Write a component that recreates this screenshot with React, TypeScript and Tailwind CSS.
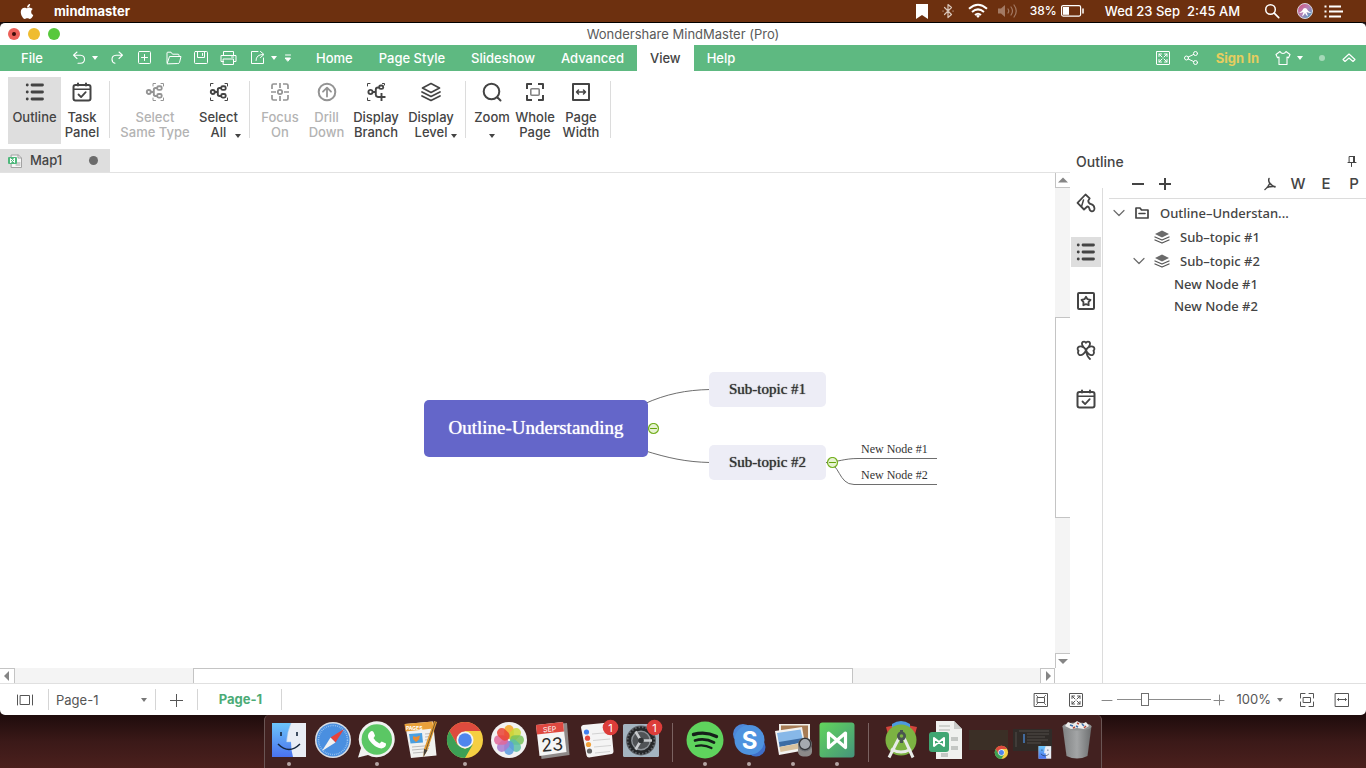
import React from "react";
import type { ReactNode } from "react";
import { FaApple } from "react-icons/fa";

type IconProps = { w?: number; h?: number; sw?: number; children: ReactNode; className?: string };

function Icon({ w = 20, h = 20, sw = 1, children, className = "" }: IconProps) {
  return (
    <svg
      width={w}
      height={h}
      viewBox={`0 0 ${w} ${h}`}
      fill="none"
      stroke="currentColor"
      strokeWidth={sw}
      strokeLinecap="round"
      strokeLinejoin="round"
      className={`shrink-0 ${className}`}
      aria-hidden="true"
    >
      {children}
    </svg>
  );
}

const Caret = ({ className = "" }: { className?: string }) => (
  <Icon w={6} h={4} className={className}>
    <path d="M0 0h6L3 4z" fill="currentColor" stroke="none" />
  </Icon>
);

/* ---------- shared glyphs ---------- */

const ListGlyph = () => (
  <Icon w={20} h={20} sw={2}>
    <path d="M7 3h10.500M7 10h10.500M7 17h10.500" strokeWidth="2.800" />
    <path d="M2.200 3h.1M2.200 10h.1M2.200 17h.1" strokeWidth="2.800" />
  </Icon>
);

const CalendarGlyph = () => (
  <Icon w={20} h={20} sw={2}>
    <rect x="1.500" y="3" width="17" height="15.500" rx="2" />
    <path d="M2 7.300h16" strokeWidth="1.400" />
    <path d="M6 1.500v2M14 1.500v2" />
    <path d="M6.500 12.500l2.600 2.600 4.600-5" strokeWidth="1.800" />
  </Icon>
);

const BranchGlyph = ({ full }: { full?: boolean }) => (
  <Icon w={20} h={20} sw={2}>
    <path
      d={
        full
          ? "M4 1.500H1.500V4M16 1.500h2.500V4M18.500 16v2.500H16M4 18.500H1.500V16"
          : "M8 4V1.500h2.500M16 1.500h2.500V4M18.500 16v2.500H16M10.500 18.500H8V16"
      }
      strokeWidth="1"
    />
    <circle cx="3.800" cy="10" r="2" strokeWidth="1.900" />
    <path d="M6 10h2.500M12 6h-1.500q-1.700 0-1.700 1.700v4.600q0 1.700 1.700 1.700H12" strokeWidth="1.900" />
    <rect x="12.200" y="4.300" width="4.500" height="3.600" rx="1.500" strokeWidth="1.900" />
    <rect x="12.200" y="12" width="4.500" height="3.600" rx="1.500" strokeWidth="1.900" />
  </Icon>
);

const DisplayBranchGlyph = () => (
  <Icon w={20} h={20} sw={2}>
    <path d="M4 1.500H1.500V4M16.500 1.500h2V3M1.500 16v2.500H4" strokeWidth="1" />
    <circle cx="4.500" cy="10" r="2.100" strokeWidth="1.900" />
    <path d="M7 10h2.500M13 5.500h-1q-2.200 0-2.200 2.200v5q0 1.800 1.700 2" strokeWidth="1.900" />
    <rect x="13.200" y="3.500" width="4" height="3.400" rx="1.500" strokeWidth="1.900" />
    <path d="M15.500 11v8M11.500 15h8" strokeWidth="1.900" strokeLinecap="butt" />
  </Icon>
);

const FocusGlyph = () => (
  <Icon w={20} h={20} sw={2}>
    <path d="M7 2H3.500Q2 2 2 3.500V7M13 2h3.500Q18 2 18 3.500V7M7 18H3.500Q2 18 2 16.500V13M13 18h3.500q1.500 0 1.500-1.500V13" strokeWidth="1.700" strokeLinecap="butt" />
    <path d="M10 1v5M10 14v5M1 10h5M14 10h5" strokeWidth="1.700" strokeLinecap="butt" />
    <circle cx="10" cy="10" r="2.200" strokeWidth="1.700" />
  </Icon>
);

const DrillGlyph = () => (
  <Icon w={20} h={20} sw={2}>
    <circle cx="10" cy="10" r="8.300" />
    <path d="M10 14.500V6M6 9.700L10 5.700l4 4" strokeWidth="1.800" />
  </Icon>
);

const LevelGlyph = () => (
  <Icon w={22} h={20} sw={2}>
    <path d="M11 1.500L19.500 6 11 10.500 2.500 6z" strokeWidth="1.700" />
    <path d="M2 10l9 4.500L20 10M2 14l9 4.500L20 14" strokeWidth="1.700" />
  </Icon>
);

const SearchGlyph = () => (
  <Icon w={20} h={20} sw={2}>
    <circle cx="9.500" cy="9.500" r="7.800" />
    <path d="M15.500 15.500l3 3" />
  </Icon>
);

const WholePageGlyph = () => (
  <Icon w={20} h={20} sw={2}>
    <path d="M7 2H2v5M13 2h5v5M7 18H2v-5M13 18h5v-5" strokeLinecap="butt" />
    <rect x="5.800" y="6.800" width="8.400" height="6.400" rx="1" strokeWidth="1.600" stroke="#858585" />
  </Icon>
);

const PageWidthGlyph = () => (
  <Icon w={20} h={20} sw={2}>
    <rect x="2" y="2" width="16" height="16" />
    <path d="M5.500 10h9M7.500 8l-2 2 2 2M12.500 8l2 2-2 2" strokeWidth="1.500" />
  </Icon>
);

const FitGlyph = () => (
  <Icon w={16} h={16} sw={1}>
    <rect x="1.500" y="1.500" width="13" height="13" />
    <rect x="4.500" y="5.500" width="7" height="5" />
    <path d="M3.500 3.500l1 1M12.500 3.500l-1 1M3.500 12.500l1-1M12.500 12.500l-1-1" />
  </Icon>
);

const ExpandGlyph = () => (
  <Icon w={16} h={16} sw={1}>
    <rect x="1.500" y="1.500" width="13" height="13" rx="0.500" />
    <path d="M4 6.500V4h2.500M4 4l3 3M9.500 4H12v2.500M12 4L9 7M4 9.500V12h2.500M4 12l3-3M9.500 12H12V9.500M12 12L9 9" />
  </Icon>
);

/* ---------- system menu bar ---------- */

function MenuBar() {
  return (
    <header className="flex h-[22px] shrink-0 items-center bg-[#6d300f] text-[13px] leading-4 text-white">
      <FaApple className="ml-5 h-[17px] w-[14px] shrink-0" />
      <span className="ml-5 font-bold">mindmaster</span>
      <div className="ml-auto flex items-center pr-[22px] font-medium">
        <Icon w={12} h={16}>
          <path d="M0 1h12v15l-6-4-6 4z" fill="#fff" stroke="none" />
        </Icon>
        <Icon w={12} h={16} className="ml-3.5 text-[#d9c5b8]">
          <path d="M2.500 4.500l7 7L6 14.500v-13l3.500 3-7 7M1 8h.1M11 8h.1" strokeWidth="1.200" />
        </Icon>
        <Icon w={20} h={16} className="ml-3.5">
          <path d="M1 5.800q9-8 18 0M4 9q6-5.200 12 0M7 12q3-2.600 6 0" strokeWidth="2" strokeLinecap="butt" />
          <path d="M8 12.800q2-1.500 4 0L10 15z" fill="#fff" stroke="none" />
        </Icon>
        <Icon w={20} h={16} className="ml-2.5 text-[#a37a64]">
          <path d="M0 5.500h3l4-3.500v12l-4-3.500H0z" fill="currentColor" stroke="none" />
          <path d="M10 6q1.500 2 0 4M13 4q3 4 0 8M16 2q4.500 6 0 12" strokeWidth="1.200" />
        </Icon>
        <span className="ml-3 text-xs">38%</span>
        <Icon w={24} h={14} className="ml-1">
          <rect x="0.600" y="1.600" width="19" height="10.500" rx="1.500" strokeWidth="1.200" />
          <rect x="2" y="3" width="6" height="7.800" fill="#fff" stroke="none" />
          <path d="M22 5v4" strokeWidth="1.500" />
        </Icon>
        <span className="ml-5 whitespace-pre">Wed 23 Sep  2:45 AM</span>
        <Icon w={16} h={16} className="ml-6">
          <circle cx="6.500" cy="6.500" r="4.800" strokeWidth="1.500" />
          <path d="M10.200 10.200l4.500 4.500" strokeWidth="1.700" />
        </Icon>
        <Icon w={18} h={18} className="ml-4">
          <defs>
            <linearGradient id="siri" x1="0" y1="0" x2="1" y2="1">
              <stop offset="0" stopColor="#d94a72" />
              <stop offset="0.500" stopColor="#b583b8" />
              <stop offset="1" stopColor="#2ea3c4" />
            </linearGradient>
          </defs>
          <circle cx="9" cy="9" r="7.500" fill="url(#siri)" stroke="#d9d5dc" />
          <path d="M3 11q3-1 4.500-4.500Q9 5.500 10.500 6.500q1.500 3.500 5 4.500-3 0-5-1 1 3 1.500 4.500-2-1-3-3.500-1 2.500-3 3.500.5-2 1.500-4.500-2 1-4.500 1z" fill="#fff" stroke="none" />
        </Icon>
        <Icon w={20} h={16} className="ml-2.5">
          <path d="M5 3.500h12M5 8.500h14M5 13.500h12" strokeWidth="2" strokeLinecap="butt" />
          <path d="M0.500 3.500h2M0.500 8.500h2M0.500 13.500h2" strokeWidth="2" strokeLinecap="butt" />
        </Icon>
      </div>
    </header>
  );
}

/* ---------- title and command bars ---------- */

function TitleBar() {
  return (
    <div className="relative flex h-[22px] shrink-0 items-center justify-center">
      <div className="absolute left-2 flex gap-2">
        <button aria-label="Close" className="flex size-3 items-center justify-center rounded-full bg-[#ec6059]">
          <span className="size-1 rounded-full bg-[#3c0c0a]" />
        </button>
        <button aria-label="Minimize" className="size-3 rounded-full bg-[#efbc30]" />
        <button aria-label="Zoom window" className="size-3 rounded-full bg-[#57c83c]" />
      </div>
      <h1 className="text-[13px] leading-4 text-[#5a5a5a]">Wondershare MindMaster (Pro)</h1>
    </div>
  );
}

const TABS = ["Home", "Page Style", "Slideshow", "Advanced", "View", "Help"];

function CommandBar() {
  return (
    <div className="flex h-[26px] shrink-0 items-center bg-[#5eb981] text-[13px] font-medium text-white">
      <button className="h-full w-16 pt-0.5 text-center">File</button>
      <div className="flex w-[239px] shrink-0 items-center pl-2">
        <button aria-label="Undo">
          <Icon w={16} h={16}>
            <path d="M5 2L1.500 5.200 5 8.500M2 5.200h6.500q4 .3 4 4t-4 4H6" strokeWidth="1.100" />
          </Icon>
        </button>
        <Caret className="ml-1" />
        <button aria-label="Redo" className="ml-3">
          <Icon w={14} h={16}>
            <path d="M9 2l3.500 3.200L9 8.500M12 5.200H6q-4 .3-4 4 0 3.300 3 4" strokeWidth="1.100" />
          </Icon>
        </button>
        <button aria-label="New" className="ml-3.5">
          <Icon w={14} h={16}>
            <rect x="0.500" y="1.500" width="12" height="12" rx="1" />
            <path d="M6.500 4.500v6M3.500 7.500h6" />
          </Icon>
        </button>
        <button aria-label="Open" className="ml-3.5">
          <Icon w={16} h={16}>
            <path d="M1 12.500V3q0-.8.800-.800H5l1.500 2H12q1 0 1 1v1.300M1.200 13.500L3.500 6.500H15l-1.500 6q-.3 1-1.300 1z" />
          </Icon>
        </button>
        <button aria-label="Save" className="ml-3">
          <Icon w={14} h={16}>
            <rect x="0.500" y="1.500" width="13" height="12" rx="1" />
            <path d="M3.500 2v5.500h7V2M8.500 3.500v2" />
          </Icon>
        </button>
        <button aria-label="Print" className="ml-3">
          <Icon w={17} h={16}>
            <path d="M3.500 5V1.500h10V5M3.500 11.500H1V5.500h15v6h-2.500M3.500 9h10v5.500h-10zM11.500 7h2" />
          </Icon>
        </button>
        <button aria-label="Export" className="ml-3.5">
          <Icon w={14} h={16}>
            <path d="M7 1.500H.5v12h12V8M5 10.500q0-6 7-6M9.500 1.500l3.500 3-3.500 3" />
          </Icon>
        </button>
        <Caret className="ml-1.5" />
        <button aria-label="More commands" className="ml-2">
          <Icon w={6} h={8}>
            <path d="M0.500 1h5M0.500 4h5L3 7z" fill="currentColor" />
          </Icon>
        </button>
      </div>
      <nav className="flex h-full">
        {TABS.map((t) => (
          <button
            key={t}
            className={
              t === "View"
                ? "h-full bg-white px-[13px] pt-0.5 text-[#444]"
                : "h-full px-[13px] pt-0.5"
            }
          >
            {t}
          </button>
        ))}
      </nav>
      <div className="ml-auto flex h-full items-center pr-2.5">
        <button aria-label="Full screen"><ExpandGlyph /></button>
        <button aria-label="Share" className="ml-3">
          <Icon w={16} h={16}>
            <circle cx="3.500" cy="8" r="2" />
            <circle cx="12.500" cy="3.500" r="2" />
            <circle cx="12.500" cy="12.500" r="2" />
            <path d="M5.300 7l5.400-2.600M5.300 9l5.400 2.600" />
          </Icon>
        </button>
        <a href="#sign-in" className="ml-[17px] pt-0.5 font-bold text-[#e7cd5e]">Sign In</a>
        <button aria-label="Theme" className="ml-4">
          <Icon w={16} h={16}>
            <path d="M5 1.500L1 4.500l1.500 3.300L4 7v7.500h8V7l1.500.800L15 4.500l-4-3q-1 2-3 2t-3-2z" strokeWidth="1.100" />
          </Icon>
        </button>
        <Caret className="ml-1.5" />
        <span className="ml-4 size-1.5 rounded-sm bg-[#a5d9b8]" />
        <button aria-label="Collapse ribbon" className="ml-[17px]">
          <Icon w={14} h={12}>
            <path d="M1 7.500L7 2l6 5.500L11 9.500 7 6 3 9.500z" strokeWidth="1.100" />
          </Icon>
        </button>
      </div>
    </div>
  );
}

/* ---------- ribbon ---------- */

type RibbonButtonProps = {
  icon: ReactNode;
  top: string;
  bottom?: string;
  width: string;
  off?: boolean;
  active?: boolean;
  caret?: boolean;
};

function RibbonButton({ icon, top, bottom, width, off, active, caret }: RibbonButtonProps) {
  return (
    <button
      disabled={off}
      className={`relative flex h-[67px] shrink-0 flex-col items-center pt-[5px] text-[13px] leading-[15px] ${width} ${
        off ? "text-[#b3b3b3]" : "text-[#444]"
      } ${active ? "bg-[#dedede]" : ""}`}
    >
      <span className={off ? "text-[#949494]" : ""}>{icon}</span>
      <span className="mt-2 whitespace-nowrap font-medium">{top}</span>
      {bottom && <span className="whitespace-nowrap font-medium">{bottom}</span>}
      {caret && (
        <Caret className={bottom ? "absolute right-0.5 bottom-1.5" : "absolute bottom-1.5"} />
      )}
    </button>
  );
}

const Divider = () => <span className="mx-1.5 mt-1 h-[57px] w-px shrink-0 bg-[#dcdcdc]" />;

function Ribbon() {
  return (
    <div className="flex h-[78px] shrink-0 items-start pt-1.5 pl-2">
      <RibbonButton width="w-[53px]" active icon={<ListGlyph />} top="Outline" />
      <RibbonButton width="w-[42px]" icon={<CalendarGlyph />} top="Task" bottom="Panel" />
      <Divider />
      <RibbonButton width="w-[78px]" off icon={<BranchGlyph />} top="Select" bottom="Same Type" />
      <RibbonButton width="w-[49px]" icon={<BranchGlyph full />} top="Select" bottom="All" caret />
      <Divider />
      <RibbonButton width="w-[48px]" off icon={<FocusGlyph />} top="Focus" bottom="On" />
      <RibbonButton width="w-[45px]" off icon={<DrillGlyph />} top="Drill" bottom="Down" />
      <RibbonButton width="w-[54px]" icon={<DisplayBranchGlyph />} top="Display" bottom="Branch" />
      <RibbonButton width="w-[56px]" icon={<LevelGlyph />} top="Display" bottom="Level" caret />
      <Divider />
      <RibbonButton width="w-[40px]" icon={<SearchGlyph />} top="Zoom" caret />
      <RibbonButton width="w-[46px]" icon={<WholePageGlyph />} top="Whole" bottom="Page" />
      <RibbonButton width="w-[46px]" icon={<PageWidthGlyph />} top="Page" bottom="Width" />
      <Divider />
    </div>
  );
}

/* ---------- canvas ---------- */

function MindMap() {
  return (
    <div className="absolute top-[199px] left-[424px] h-[113px] w-[513px] font-['Liberation_Serif',serif]">
      <svg width="513" height="114" fill="none" stroke="#6e6e6e" strokeWidth="1" className="absolute top-0 left-0">
        <path d="M220 32C242 22 262 18 286 17.500M220 78.500C244 86 262 90 286 90.500M402 90.500C414 90 420 86.500 434 86.500H513M402 90.500C416 90 414 112.500 430 112.500H513" />
      </svg>
      <div className="absolute top-7 left-0 flex h-[57px] w-[224px] items-center justify-center rounded-[5px] bg-[#6466c9] text-[19px] text-white text-shadow-[0_0_1px_#ffffff]">
        Outline-Understanding
      </div>
      <div className="absolute top-0 left-[285px] flex h-[35px] w-[117px] items-center justify-center rounded-[5px] bg-[#ededf6] text-[15px] text-[#333] text-shadow-[0_0_1px_#333333]">
        Sub-topic #1
      </div>
      <div className="absolute top-[73px] left-[285px] flex h-[35px] w-[117px] items-center justify-center rounded-[5px] bg-[#ededf6] text-[15px] text-[#333] text-shadow-[0_0_1px_#333333]">
        Sub-topic #2
      </div>
      <div className="absolute top-[69px] left-[433px] w-20 pl-1 text-xs leading-4 text-[#333]">New Node #1</div>
      <div className="absolute top-[95px] left-[433px] w-20 pl-1 text-xs leading-4 text-[#333]">New Node #2</div>
      <button aria-label="Collapse topic" className="absolute top-[51px] left-[224px]">
        <Icon w={12} h={12}>
          <circle cx="5.500" cy="5.500" r="5" fill="#e6f2d2" stroke="#75b021" strokeWidth="1.200" />
          <path d="M2.500 5.500h6" stroke="#66a50c" strokeWidth="1.200" />
        </Icon>
      </button>
      <button aria-label="Collapse topic" className="absolute top-[85px] left-[403px]">
        <Icon w={12} h={12}>
          <circle cx="5.500" cy="5.500" r="5" fill="#e6f2d2" stroke="#75b021" strokeWidth="1.200" />
          <path d="M2.500 5.500h6" stroke="#66a50c" strokeWidth="1.200" />
        </Icon>
      </button>
    </div>
  );
}

function ScrollArrow({ d, label, className = "" }: { d: string; label: string; className?: string }) {
  return (
    <button
      aria-label={label}
      className={`flex size-[15px] shrink-0 items-center justify-center border-[#c4c4c4] bg-white text-[#858585] ${className}`}
    >
      <Icon w={10} h={10}>
        <path d={d} fill="currentColor" stroke="none" />
      </Icon>
    </button>
  );
}

function Workspace() {
  return (
    <div className="flex min-w-0 flex-1 flex-col">
      <div className="flex h-6 shrink-0 items-start border-b border-[#e2e2e2]">
        <button className="flex h-[23px] w-[110px] items-center bg-[#dedede] pl-2 text-[13px] font-medium text-[#444]">
          <Icon w={14} h={14}>
            <path d="M3.500 1h7l3 3v9.500h-10z" fill="#f7f7f7" stroke="#a3a3a3" />
            <path d="M10 1v3h3M8 9h4M8 11h4" stroke="#a3a3a3" />
            <rect x="0" y="3" width="9" height="7" rx="1" fill="#4fb87c" stroke="none" />
            <path d="M2.500 8.500v-4l4 4v-4z" stroke="#fff" />
          </Icon>
          <span className="ml-2">Map1</span>
          <span className="ml-auto mr-3 size-[9px] rounded-full bg-[#6b6b6b]" />
        </button>
      </div>
      <div className="flex min-h-0 flex-1">
        <main className="relative min-w-0 flex-1 overflow-hidden">
          <MindMap />
        </main>
        <div className="flex w-[15px] shrink-0 flex-col bg-[#f4f4f4]">
          <ScrollArrow label="Scroll up" d="M0 7.500h10L5 2.500z" className="border-b border-l" />
          <div className="flex-[130]" />
          <div className="flex-[200] border-y border-l border-[#c4c4c4] bg-white" />
          <div className="flex-[136]" />
          <ScrollArrow label="Scroll down" d="M0 3h10L5 8z" className="border-t border-l" />
        </div>
      </div>
      <div className="flex h-[15px] shrink-0 pr-[15px]">
        <div className="flex flex-1 bg-[#f4f4f4]">
          <ScrollArrow label="Scroll left" d="M7 0v10L2 5z" className="border-t border-r" />
          <div className="flex-[178]" />
          <div className="flex-[660] border-x border-t border-[#c4c4c4] bg-white" />
          <div className="flex-[187]" />
          <ScrollArrow label="Scroll right" d="M3 0v10l5-5z" className="border-x border-t" />
        </div>
      </div>
    </div>
  );
}

/* ---------- outline panel ---------- */

const Chevron = () => (
  <Icon w={12} h={8}>
    <path d="M1 1.500l5 5 5-5" stroke="#6b6b6b" strokeWidth="1.200" />
  </Icon>
);

const Layers = () => (
  <Icon w={16} h={14}>
    <path d="M8 .5L15 4 8 7.500 1 4z" fill="#6b6b6b" stroke="none" />
    <path d="M1 7l7 3 7-3M1 10l7 3 7-3" stroke="#555" strokeWidth="1.300" />
  </Icon>
);

function SidePanel() {
  return (
    <aside className="flex w-[296px] shrink-0 flex-col text-[#444]">
      <div className="flex h-6 shrink-0 items-center pr-2 pl-1.5">
        <h2 className="text-[14px] font-medium">Outline</h2>
        <button aria-label="Pin panel" className="ml-auto">
          <Icon w={12} h={12}>
            <path d="M3.500 1.500h5v6h-5zM2 7.500h8M5.500 8v3.500" />
            <path d="M8 1v7" strokeWidth="2" strokeLinecap="butt" />
          </Icon>
        </button>
      </div>
      <div className="flex min-h-0 flex-1">
        <div className="flex w-8 shrink-0 flex-col gap-[19px] pt-[15px] pl-px">
          <button aria-label="Format" className="flex size-[30px] items-center justify-center">
            <Icon w={20} h={20} sw={2}>
              <path d="M1.500 9.800L9.500 1.500l4.200 3.800-1.500 2.600q.5 3 3 3.300 3 1 3.300 4.300-.2 3-2.800 2.800-2-.3-2.400-3-.6-1.800-2-1.800L8 16.500z" strokeWidth="1.800" />
              <path d="M5.500 13.500l2-6.500" strokeWidth="1.500" />
            </Icon>
          </button>
          <button aria-label="Outline" className="flex size-[30px] items-center justify-center bg-[#dedede]">
            <ListGlyph />
          </button>
          <button aria-label="Icons" className="flex size-[30px] items-center justify-center">
            <Icon w={20} h={20} sw={2}>
              <rect x="2" y="2" width="16" height="16" rx="1" />
              <path d="M10 5.800l1.500 2.400 3 .7-2 2.300.2 3-2.700-1-2.700 1 .2-3-2-2.300 3-.7z" strokeWidth="1.800" />
            </Icon>
          </button>
          <button aria-label="Clip art" className="flex size-[30px] items-center justify-center">
            <Icon w={20} h={20} sw={2}>
              <path d="M10 9.500C7 7 4.500 3.500 7 1.800q2-.8 3 1 1-1.800 3-1C15.500 3.500 13 7 10 9.500zM10 10C8 6.500 4 5.500 2 7.500q-1 2 .5 3.200-1.300 2.300.7 4.100C6 16 9 13 10 10zM10 10c2-3.500 6-4.500 8-2.500q1 2-.5 3.200 1.300 2.300-.7 4.100C14 16 11 13 10 10zM10 10q.5 6 4 9" strokeWidth="1.800" />
            </Icon>
          </button>
          <button aria-label="Task" className="flex size-[30px] items-center justify-center">
            <CalendarGlyph />
          </button>
        </div>
        <div className="mt-[15px] w-px shrink-0 bg-[#dcdcdc]" />
        <div className="min-w-0 flex-1 pl-1.5">
          <div className="flex h-[26px] items-center border-b border-[#dcdcdc] pr-1.5 pb-1 pl-[22px] text-[15px] leading-5 font-medium">
            <button aria-label="Collapse all">
              <Icon w={14} h={14}><path d="M1 7h12" strokeWidth="2" strokeLinecap="butt" /></Icon>
            </button>
            <button aria-label="Expand all" className="ml-3.5">
              <Icon w={12} h={14}><path d="M0 7h12M6 1v12" strokeWidth="2" strokeLinecap="butt" /></Icon>
            </button>
            <div className="ml-auto flex items-center">
              <button aria-label="Export as PDF">
                <Icon w={12} h={14}>
                  <path d="M5 1.500q-.8 2.500.7 4.500 1.800 2.500 5.300 4M5.700 6.500Q4 10.500 1 12.500M3 10.500q4-1.500 8-1" strokeWidth="1.500" />
                </Icon>
              </button>
              <button className="w-5 ml-3 text-center">W</button>
              <button className="w-5 ml-2 text-center">E</button>
              <button className="w-3 ml-3 text-center">P</button>
            </div>
          </div>
          <ul className="pt-0.5 font-['Noto_Sans',sans-serif] text-[13px] leading-6 font-medium">
            <li className="flex h-6 items-center pl-1">
              <Chevron />
              <Icon w={14} h={14} sw={2} className="ml-2.5">
                <path d="M1 12V2h4l1.500 2H13v8z" strokeWidth="1.700" />
                <path d="M4 7.500h6" strokeWidth="1.600" />
              </Icon>
              <span className="ml-[11px]">Outline–Understan...</span>
            </li>
            <li className="flex h-6 items-center pl-[45px]">
              <Layers />
              <span className="ml-2.5">Sub–topic #1</span>
            </li>
            <li className="flex h-6 items-center pl-6">
              <Chevron />
              <span className="ml-[9px]"><Layers /></span>
              <span className="ml-2.5">Sub–topic #2</span>
            </li>
            <li className="flex h-[22px] items-center pl-[65px]">New Node #1</li>
            <li className="flex h-[22px] items-center pl-[65px]">New Node #2</li>
          </ul>
        </div>
      </div>
    </aside>
  );
}

/* ---------- status bar ---------- */

function StatusBar() {
  return (
    <footer className="flex h-8 shrink-0 items-center border-t border-[#e0e0e0] text-[13px] text-[#555]">
      <button aria-label="Page panel" className="flex w-12 justify-center pl-0.5">
        <Icon w={18} h={12}>
          <path d="M1.500 1v10M16.500 1v10" />
          <rect x="4.500" y="1.500" width="9" height="9" />
        </Icon>
      </button>
      <span className="h-[21px] w-px bg-[#d5d5d5]" />
      <div className="relative flex w-[106px] items-center">
        <select aria-label="Page" className="w-full appearance-none bg-transparent pt-0.5 pl-[7px] outline-none">
          <option>Page-1</option>
        </select>
        <Caret className="pointer-events-none absolute right-2 text-[#777]" />
      </div>
      <span className="h-[21px] w-px bg-[#d5d5d5]" />
      <button aria-label="Add page" className="flex w-[41px] justify-center">
        <Icon w={14} h={14}><path d="M0 7.500h13M6.500 1v13" strokeLinecap="butt" /></Icon>
      </button>
      <span className="h-[21px] w-px bg-[#d5d5d5]" />
      <button className="w-[83px] pl-0.5 text-center font-bold text-[#4bab76]">Page-1</button>
      <span className="h-[21px] w-px bg-[#d5d5d5]" />
      <div className="ml-auto flex items-center pr-4">
        <button aria-label="Fit page"><FitGlyph /></button>
        <button aria-label="Full screen" className="ml-[19px]"><ExpandGlyph /></button>
        <button aria-label="Zoom out" className="ml-[17px]">
          <Icon w={12} h={12}><path d="M1 6.500h10" stroke="#888" /></Icon>
        </button>
        <input
          type="range"
          aria-label="Zoom level"
          min={0}
          max={100}
          defaultValue={28}
          className="ml-1 h-4 w-[94px] appearance-none bg-transparent [&::-webkit-slider-runnable-track]:h-px [&::-webkit-slider-runnable-track]:bg-[#8c8c8c] [&::-webkit-slider-thumb]:-mt-1.5 [&::-webkit-slider-thumb]:h-[13px] [&::-webkit-slider-thumb]:w-2 [&::-webkit-slider-thumb]:appearance-none [&::-webkit-slider-thumb]:border [&::-webkit-slider-thumb]:border-[#707070] [&::-webkit-slider-thumb]:bg-white"
        />
        <button aria-label="Zoom in" className="ml-0.5">
          <Icon w={12} h={12}><path d="M1 6.500h10M6.500 1v10" stroke="#888" /></Icon>
        </button>
        <button className="ml-3 flex items-center">
          100% <Caret className="ml-1.5 text-[#777]" />
        </button>
        <button aria-label="Whole page" className="ml-4">
          <Icon w={16} h={16}>
            <path d="M6 1.500H1.500V6M10 1.500h4.500V6M6 14.500H1.500V10M10 14.500h4.500V10" />
            <rect x="4.500" y="5.500" width="7" height="5" />
          </Icon>
        </button>
        <button aria-label="Page width" className="ml-[19px]">
          <Icon w={16} h={16}>
            <rect x="1.500" y="1.500" width="13" height="13" />
            <path d="M3.500 7.500h9M4.500 6.500v2M11.500 6.500v2" />
          </Icon>
        </button>
      </div>
    </footer>
  );
}

/* ---------- dock ---------- */

const PETALS = [
  ["#f5a623", 0], ["#c9d93a", 45], ["#79c25a", 90], ["#5cc0a5", 135],
  ["#5a9be0", 180], ["#a77bd0", 225], ["#e0679a", 270], ["#ea4335", 315],
] as const;

const ChromeMark = () => (
  <g stroke="none">
    <circle cx="20" cy="20" r="18" fill="#f5cf42" />
    <path d="M4.400 11A18 18 0 0 1 35.600 11H20L12.200 24.500z" fill="#dd4b3e" />
    <path d="M4.400 11A18 18 0 0 0 20 38l7.800-13.500L20 29 12.200 24.500z" fill="#3ca055" />
    <circle cx="20" cy="20" r="8.500" fill="#f3f3f3" />
    <circle cx="20" cy="20" r="6.800" fill="#4e86ee" />
  </g>
);

const FinderMark = () => (
  <g stroke="none">
    <rect x="3" y="3" width="34" height="34" fill="#e9edf5" />
    <path d="M3 3h19q-4 9-4.500 19H22q0 8 2 15H3z" fill="url(#finderBlue)" />
    <path d="M12 12v4M28 12v4" stroke="#15263d" strokeWidth="1.600" />
    <path d="M9 24q11 11 22 0" stroke="#15263d" strokeWidth="1.500" fill="none" />
    <path d="M22 3q-4 9-4.500 19H22" stroke="#8cc0ec" strokeWidth="0.500" fill="none" />
  </g>
);

const Badge = () => (
  <g stroke="none">
    <circle cx="33.500" cy="7.500" r="7.800" fill="#dd3d3a" />
    <text x="33.500" y="11.500" textAnchor="middle" fontSize="11" fill="#fff" fontFamily="Inter, sans-serif">1</text>
  </g>
);

const GEAR_TEETH = Array.from({ length: 24 }, (_, i) => i * 15);

type DockItem = { name: string; running?: boolean; art: ReactNode };

const APPS: DockItem[] = [
  { name: "Finder", running: true, art: <FinderMark /> },
  {
    name: "Safari",
    art: (
      <g stroke="none">
        <circle cx="20" cy="20" r="18" fill="#d9dde3" />
        <circle cx="20" cy="20" r="16.500" fill="#4a8fe0" />
        <circle cx="20" cy="20" r="14.500" fill="none" stroke="#a8cdf2" strokeWidth="1.500" strokeDasharray="0.700 1.200" />
        <path d="M31 9L17.500 17.500 22.500 22.500z" fill="#e8433b" />
        <path d="M9 31l8.500-13.500 5 5z" fill="#f1f1f1" />
      </g>
    ),
  },
  {
    name: "WhatsApp",
    running: true,
    art: (
      <g stroke="none">
        <path d="M1 37.500l3-9.500A18 18 0 1 1 11 35z" fill="#f0f2f0" />
        <circle cx="19.800" cy="19.500" r="15.200" fill="#5bc764" />
        <path d="M13 12q2-2 3.500 0l1.500 3.500q-.5 1.500-1.500 2.500 2 4 6 5.500l2.200-2 4.300 2q.5 4-4.500 5-5-.5-9.500-5T11 15.500q.3-2.300 2-3.500z" fill="#fff" />
      </g>
    ),
  },
  {
    name: "Pages",
    art: (
      <g stroke="none">
        <path d="M4 4l28-2.500 3.500 34L10 38z" fill="#f1f1ef" />
        <path d="M3.500 4l28-2.500.7 7L4.500 11.500z" fill="#e9a03b" />
        <text x="5" y="9.500" fontSize="5" fontWeight="700" fill="#fff" fontFamily="Inter, sans-serif">PAGES</text>
        <path d="M8 14l13-1 1 9.500-12.500 1z" fill="#4a9fe0" />
        <path d="M12 16l3 1 4-1.500-1 4-3 2.500-3-3z" fill="#e88b32" />
        <path d="M24 14l6-.5M24 17l6-.5M24 20l6-.5M11 27l18-1.500M11 30l17-1.500M12 33l12-1" stroke="#bbb" strokeWidth="1" />
        <path d="M33 1l3 1-9.500 28-4 7 .5-8z" fill="#e39a2f" />
        <path d="M26.500 30l-4 7 .5-8z" fill="#44413d" />
        <path d="M34.500 1.500L25 30" stroke="#5b4a33" strokeWidth="0.800" />
      </g>
    ),
  },
  { name: "Chrome", running: true, art: <ChromeMark /> },
  {
    name: "Photos",
    art: (
      <g stroke="none">
        <circle cx="20" cy="20" r="18" fill="#f2f2f2" />
        {PETALS.map(([c, a]) => (
          <rect key={a} x="15.200" y="5" width="9.600" height="14" rx="4.800" fill={c} opacity="0.850" transform={`rotate(${a} 20 20)`} />
        ))}
      </g>
    ),
  },
  {
    name: "Calendar",
    art: (
      <g stroke="none">
        <path d="M5 6l29-3 2.500 32-28 4z" fill="#8f8a89" />
        <path d="M3 5l27-3 3.500 30-27 4z" fill="#f5f5f5" />
        <path d="M3 5l27-3 1 9.500-27 3z" fill="#de4840" />
        <text x="10" y="11.500" fontSize="7" fill="#fff" transform="rotate(-5 18 8)" fontFamily="Inter, sans-serif">SEP</text>
        <text x="8" y="31" fontSize="18" fill="#2c2c2c" transform="rotate(-5 18 24)" fontFamily="Inter, sans-serif">23</text>
      </g>
    ),
  },
  {
    name: "Reminders",
    art: (
      <g stroke="none">
        <path d="M6 5l26-2.500q2 0 2 2l2.500 27q0 2-2 2.500L12 37.500q-2 0-2.500-2L4 7.500q0-2 2-2.500z" fill="#f4f4f4" />
        <circle cx="9.500" cy="12" r="2.600" fill="#3f7ff0" />
        <circle cx="10.500" cy="18.200" r="2.600" fill="#e3483e" />
        <circle cx="11.500" cy="24.500" r="2.600" fill="#f0a03a" />
        <circle cx="12.500" cy="31" r="2.600" fill="#666" />
        <path d="M15 14l17-1.500M16 20.500l17-1.500M17 27l17-1.500M18 33l15-1.500" stroke="#c9c9c9" strokeWidth="0.800" />
        <Badge />
      </g>
    ),
  },
  {
    name: "System Preferences",
    art: (
      <g stroke="none">
        <rect x="2" y="4" width="36" height="33" rx="1.500" fill="#a4b4c0" />
        <circle cx="20" cy="20.500" r="15" fill="#5e6267" />
        {GEAR_TEETH.map((a) => (
          <rect key={a} x="19" y="6.500" width="2" height="4" fill="#242628" transform={`rotate(${a} 20 20.500)`} />
        ))}
        <circle cx="20" cy="20.500" r="11.200" fill="#8e9398" stroke="#26282a" strokeWidth="2.500" />
        <circle cx="20" cy="20.500" r="8.500" fill="#505356" />
        <path d="M20 20.500l-5.500-9M20 20.500h11M20 20.500l-5.500 9" stroke="#c8cbce" strokeWidth="2.500" />
        <circle cx="20" cy="20.500" r="2.800" fill="#303335" />
        <Badge />
      </g>
    ),
  },
];

const RUNNING: DockItem[] = [
  {
    name: "Spotify",
    running: true,
    art: (
      <g fill="none" stroke="#15201a" strokeLinecap="round">
        <circle cx="20" cy="20" r="18.500" fill="#5fd35d" stroke="none" />
        <path d="M8.500 14.500q12-3.500 23 2" strokeWidth="3.400" />
        <path d="M10 20.500q10-2.800 19 2" strokeWidth="2.700" />
        <path d="M11 26q8-2 15.500 2" strokeWidth="2.200" />
      </g>
    ),
  },
  {
    name: "Skype",
    running: true,
    art: (
      <g stroke="none">
        <circle cx="14" cy="14" r="10" fill="#4d87d8" />
        <circle cx="27" cy="27" r="9.500" fill="#3f6fc9" />
        <circle cx="20.500" cy="20" r="15" fill="#4f93df" />
        <text x="20.500" y="28.500" textAnchor="middle" fontSize="24" fontWeight="700" fill="#fff" fontFamily="Inter, sans-serif">S</text>
      </g>
    ),
  },
  {
    name: "Preview",
    running: true,
    art: (
      <g stroke="none">
        <path d="M6 4h31v22H6z" fill="#f0eee9" />
        <path d="M8 5.500h27v18H8z" fill="#a77c55" />
        <path d="M2 11l27-4 4 23-27 5z" fill="#f3f3f1" />
        <path d="M4 13l23.500-3.500L30 20 6 24z" fill="#87b8e8" />
        <path d="M6 22l24-4 1 4-24.500 5z" fill="#3d6ca4" />
        <path d="M6.500 27L31 22.500l1 5L7.500 32z" fill="#d9c29f" />
        <rect x="25" y="24" width="14" height="12.500" rx="5" fill="#8c8a89" />
        <circle cx="32" cy="24.500" r="7" fill="#6f7175" />
        <circle cx="32" cy="24" r="5.600" fill="#a5aab0" stroke="#35373b" strokeWidth="1.200" />
      </g>
    ),
  },
  {
    name: "MindMaster",
    running: true,
    art: (
      <g stroke="none">
        <rect x="2.500" y="2.500" width="35" height="35" rx="3" fill="url(#mindGreen)" />
        <path d="M11.500 27.500V13L28.500 27.500V13z" fill="none" stroke="#fff" strokeWidth="3.200" strokeLinejoin="round" />
      </g>
    ),
  },
];

const FILES: DockItem[] = [
  {
    name: "Android Studio",
    art: (
      <g stroke="none">
        <path d="M5 7l10-2 5 4-12 9zM36 7L26 5l-5 4 12 9z" fill="#d3443b" />
        <path d="M11 4q9-6 18 0v4H11z" fill="#4c9be0" />
        <circle cx="20" cy="20" r="15.500" fill="#7cb342" />
        <path d="M18 18L8 37.500M23 18l9 19.500M10 29q10 6 20 0" stroke="#e8ebe8" strokeWidth="3" fill="none" />
        <circle cx="20.500" cy="16" r="4.500" fill="#4a5550" />
        <path d="M20.500 10v13" stroke="#4a5550" strokeWidth="3" />
        <circle cx="20.500" cy="16" r="1.800" fill="#7cb342" />
      </g>
    ),
  },
  {
    name: "Map document",
    art: (
      <g stroke="none">
        <path d="M11 1h18l8 8v30H11z" fill="#f0f1ef" />
        <path d="M29 1v8h8z" fill="#c9cbc9" />
        <path d="M14 6h11M14 10h11" stroke="#c4c7c4" strokeWidth="1.500" />
        <path d="M26 17h7v4h-7zM26 26h7v4h-7zM16 33h7v4h-7z" fill="#c4c7c4" />
        <rect x="4" y="12" width="20" height="20" rx="3" fill="#3fa672" />
        <path d="M9 26v-8L19 26v-8z" fill="none" stroke="#fff" strokeWidth="2" strokeLinejoin="round" />
      </g>
    ),
  },
  {
    name: "Chrome window",
    art: (
      <g stroke="none">
        <rect x="0" y="10" width="39" height="20" fill="#3b2f26" />
        <g transform="translate(25 25) scale(0.37)"><ChromeMark /></g>
      </g>
    ),
  },
  {
    name: "Finder window",
    art: (
      <g stroke="none">
        <rect x="0" y="9" width="39" height="22" fill="#302b28" />
        <path d="M3 12v15M6 11h30M14 14h22M14 17h18M14 20h21M14 23h14" stroke="#5b5652" strokeWidth="0.800" />
        <path d="M11 14v9" stroke="#4880c4" strokeWidth="1.500" />
        <g transform="translate(24.500 25) scale(0.370)"><FinderMark /></g>
      </g>
    ),
  },
  {
    name: "Trash",
    art: (
      <g stroke="none">
        <path d="M5.500 6h29l-4 30q-10.500 5-21 0z" fill="url(#binGrey)" />
        <ellipse cx="20" cy="6.500" rx="14.500" ry="4" fill="#8f9192" />
        <path d="M8 6l3-4 5 2 4-3 5 3 4-2 3 4-5 3-7-1-6 1z" fill="#eeeeec" />
        <path d="M13 5l3 1M25 4l2 2M19 6l2 1" stroke="#3c6eab" strokeWidth="1.500" />
        <path d="M20 3l2 1M16 8l2-1M29 6l-2 2" stroke="#b54a3c" strokeWidth="1.500" />
      </g>
    ),
  },
];

function DockGroup({ items }: { items: DockItem[] }) {
  return (
    <>
      {items.map((a) => (
        <button key={a.name} aria-label={a.name} className="flex w-11 shrink-0 flex-col items-center pt-[5px]">
          <svg width="40" height="40" viewBox="0 0 40 40" className="overflow-visible" aria-hidden="true">{a.art}</svg>
          {a.running && <span className="mt-0.5 size-1 rounded-full bg-[#b5a5a3]" />}
        </button>
      ))}
    </>
  );
}

const DockDivider = () => <span className="mr-2.5 ml-[9px] mt-2 h-[39px] w-px bg-[#7b6261]" />;

function Dock() {
  return (
    <div className="flex shrink-0 justify-center bg-linear-to-b from-[#1f0c0c] via-[#3b1918] to-[#4b201d]">
      <svg width="0" height="0" className="absolute" aria-hidden="true">
        <defs>
          <linearGradient id="finderBlue" x1="0" y1="0" x2="0" y2="1">
            <stop offset="0" stopColor="#6cc5fa" />
            <stop offset="1" stopColor="#4a72ee" />
          </linearGradient>
          <linearGradient id="mindGreen" x1="0" y1="0" x2="1" y2="1">
            <stop offset="0" stopColor="#62d55c" />
            <stop offset="1" stopColor="#45947c" />
          </linearGradient>
          <linearGradient id="binGrey" x1="0" y1="0" x2="1" y2="0">
            <stop offset="0" stopColor="#7f8182" />
            <stop offset="0.500" stopColor="#a3a5a6" />
            <stop offset="1" stopColor="#6d6f70" />
          </linearGradient>
        </defs>
      </svg>
      <nav aria-label="Dock" className="flex h-[53px] rounded-t-[5px] border-x border-[#6a5554] bg-[#422120] px-0.5">
        <DockGroup items={APPS} />
        <DockDivider />
        <DockGroup items={RUNNING} />
        <DockDivider />
        <DockGroup items={FILES} />
      </nav>
    </div>
  );
}

export default function App() {
  return (
    <div className="flex h-screen flex-col overflow-hidden bg-[#1f0c0c] font-['Inter',sans-serif]">
      <MenuBar />
      <div className="flex min-h-0 flex-1 flex-col overflow-hidden rounded-[5px] border-t border-black bg-white">
        <TitleBar />
        <CommandBar />
        <Ribbon />
        <div className="flex min-h-0 flex-1">
          <Workspace />
          <SidePanel />
        </div>
        <StatusBar />
      </div>
      <Dock />
    </div>
  );
}
